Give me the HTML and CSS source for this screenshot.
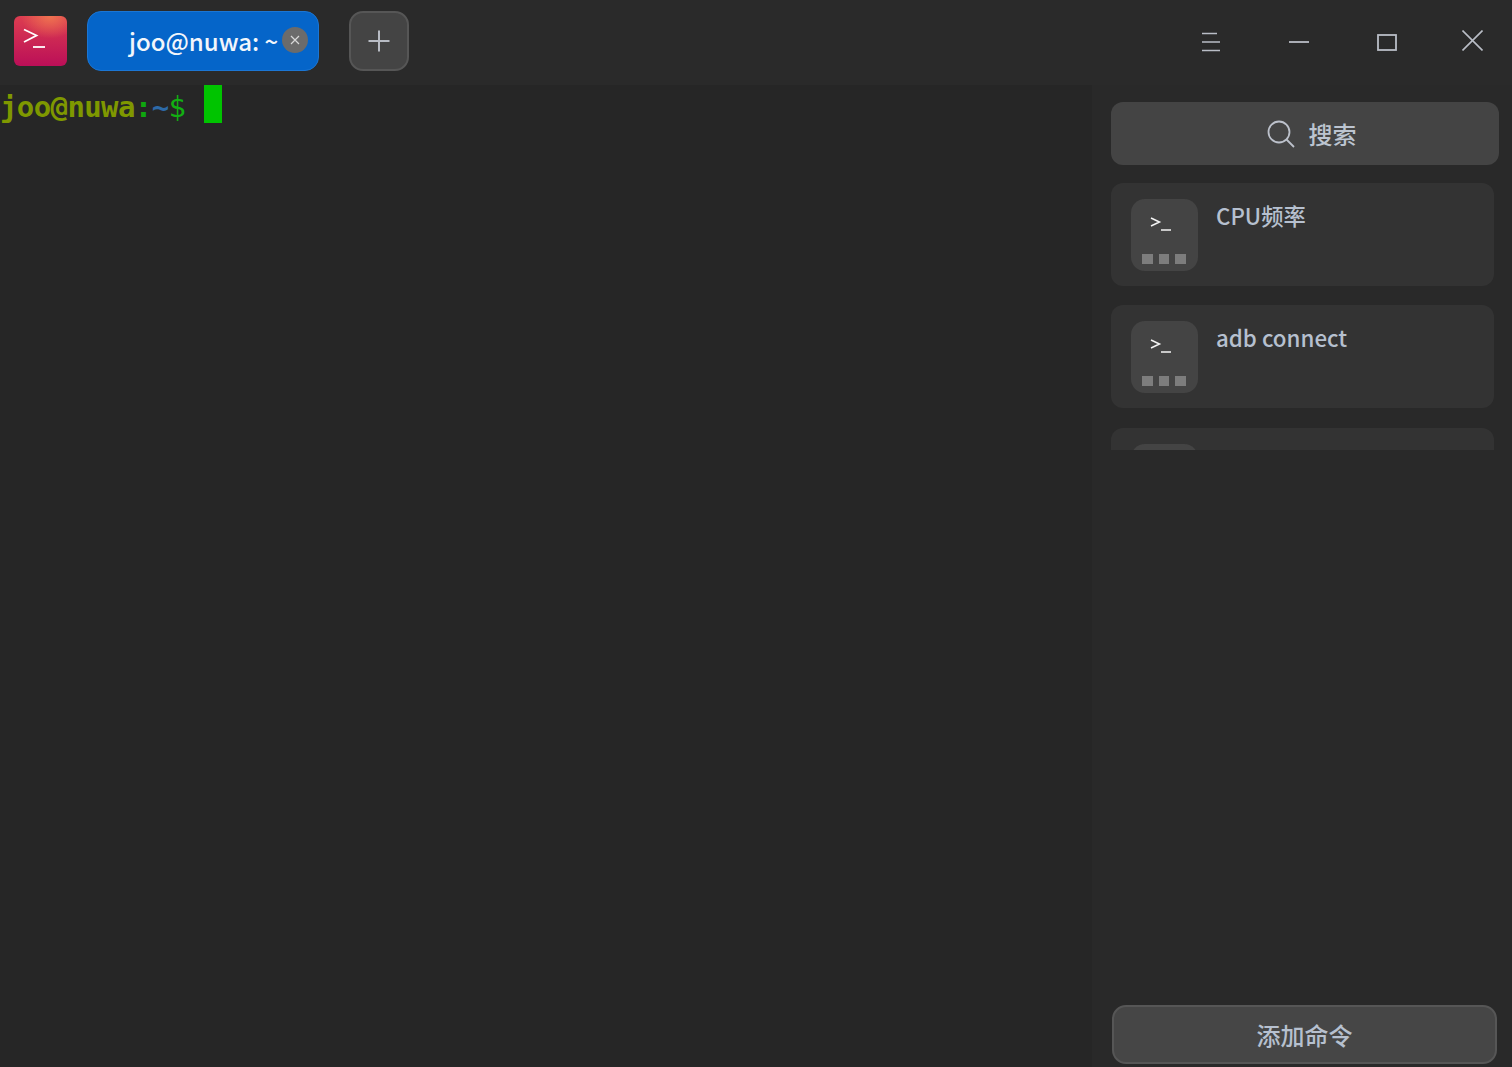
FILE: index.html
```html
<!DOCTYPE html>
<html lang="zh">
<head>
<meta charset="utf-8">
<title>joo@nuwa: ~</title>
<link rel="stylesheet" href="styles.css">
</head>
<body>
<header class="titlebar">
  <div class="logo">
    <svg width="53" height="50" viewBox="0 0 53 50" fill="none" stroke="#fff"><path d="M10 13.500 L22.500 19.500 L10 26" stroke-width="1.800"/><path d="M19 31 H31" stroke-width="1.800"/></svg>
  </div>
  <div class="tab">
    <span class="tab-title">joo@nuwa: ~</span>
    <span class="tab-close">
      <svg width="10" height="10" viewBox="0 0 10 10" stroke="#d8d8d8" stroke-width="1.200"><path d="M1 1 L9 9 M9 1 L1 9"/></svg>
    </span>
  </div>
  <button class="new-tab" aria-label="new tab">
    <svg width="22" height="22" viewBox="0 0 22 22" stroke="#b8bcc4" stroke-width="2"><path d="M11 0.500 V21.500 M0.500 11 H21.500"/></svg>
  </button>
  <div class="win-controls">
    <svg class="win-menu" width="18" height="20" viewBox="0 0 18 20" stroke="#b9bdc6" stroke-width="1.700"><path d="M0 1.500 H15 M0 10 H18 M0 18.500 H18"/></svg>
    <svg class="win-min" width="20" height="4" viewBox="0 0 20 4" stroke="#b9bdc6" stroke-width="1.800"><path d="M0 2 H20"/></svg>
    <svg class="win-max" width="20" height="17" viewBox="0 0 20 17" fill="none" stroke="#b9bdc6" stroke-width="1.800"><rect x="1" y="1" width="18" height="15"/></svg>
    <svg class="win-close" width="21" height="21" viewBox="0 0 21 21" stroke="#b9bdc6" stroke-width="1.600"><path d="M0.500 0.500 L20.500 20.500 M20.500 0.500 L0.500 20.500"/></svg>
  </div>
</header>
<main class="content">
  <section class="terminal">
    <div class="prompt"><span class="user">joo@nuwa</span><span class="colon">:</span><span class="tilde">~</span><span class="dollar">$</span><span class="cursor"></span></div>
  </section>
  <aside class="sidebar">
    <button class="search"><svg width="28" height="28" viewBox="0 0 28 28" fill="none" stroke="#bcc1cb" stroke-width="1.800"><circle cx="12" cy="12" r="10.500"/><path d="M19.500 19.500 L27 27"/></svg><span>搜索</span></button>
    <div class="list">
      <article class="card"><div class="cmd-icon"><svg class="cmd-glyph" width="24" height="18" viewBox="0 0 24 18" fill="none" stroke="#f4f4f4" stroke-width="1.500"><path d="M1 1 L9.500 5 L1 9"/><path d="M11 13 H21"/></svg><span class="dots"><i></i><i></i><i></i></span></div><div class="card-title">CPU频率</div></article>
      <article class="card"><div class="cmd-icon"><svg class="cmd-glyph" width="24" height="18" viewBox="0 0 24 18" fill="none" stroke="#f4f4f4" stroke-width="1.500"><path d="M1 1 L9.500 5 L1 9"/><path d="M11 13 H21"/></svg><span class="dots"><i></i><i></i><i></i></span></div><div class="card-title">adb connect</div></article>
      <article class="card third"><div class="cmd-icon"></div></article>
    </div>
    <button class="add">添加命令</button>
  </aside>
</main>
</body>
</html>
```
FILE: styles.css
```css
* { box-sizing: border-box; }
html, body { margin: 0; height: 100%; overflow: hidden; }
body {
  width: 1512px; height: 1067px;
  background: #262626;
  font-family: "Noto Sans CJK SC", "Noto Sans", sans-serif;
  display: flex; flex-direction: column;
}
button { font-family: inherit; padding: 0; cursor: pointer; }

.titlebar {
  height: 85px; flex: none;
  background: #2a2a2a;
  display: flex; align-items: flex-start;
  padding: 11px 0 0 14px;
}
.logo {
  width: 53px; height: 50px; margin-top: 5px;
  border-radius: 6px;
  background: radial-gradient(ellipse 55% 45% at 68% 0%, #ef7350 0%, rgba(239,115,80,0) 100%), linear-gradient(#dc3d50, #bb0f58);
}
.logo svg { display: block; }
.tab {
  width: 232px; height: 60px; margin-left: 20px;
  background: #0565c9;
  border: 1px solid #1b76d4;
  border-radius: 14px;
  display: flex; align-items: center;
  padding-left: 41px;
  position: relative;
}
.tab-title { color: #f2f6fb; font-size: 24px; line-height: 1; white-space: nowrap; font-weight: 500; }
.tab-close {
  position: absolute; left: 194px; top: 15px;
  width: 26px; height: 26px; border-radius: 50%;
  background: #6b6b6b;
  display: flex; align-items: center; justify-content: center;
}
.new-tab {
  width: 60px; height: 60px; margin-left: 30px;
  background: #444;
  border: 2px solid #565656;
  border-radius: 14px;
  display: flex; align-items: center; justify-content: center;
}
.win-controls { position: relative; flex: 1; height: 60px; }
.win-controls svg { position: absolute; }
.win-menu { left: 793px; top: 21px; }
.win-min { left: 880px; top: 29px; }
.win-max { left: 968px; top: 23px; }
.win-close { left: 1053px; top: 19px; }

.content { flex: 1; display: flex; min-height: 0; }
.terminal { flex: 1; min-width: 0; background: #262626; }
.prompt {
  display: flex; align-items: flex-start;
  font-family: "DejaVu Sans Mono", monospace;
  font-size: 29px; letter-spacing: -0.610px; line-height: 44px; height: 38px;
  white-space: pre;
}
.user { color: #7f9800; font-weight: bold; }
.colon { color: #0fa80f; font-weight: bold; }
.tilde { color: #2d6aa8; font-weight: bold; }
.dollar { color: #12b012; }
.cursor { width: 18px; height: 38px; background: #00c400; margin-left: 18.600px; }

.sidebar {
  width: 420px; flex: none;
  background: #292929;
  display: flex; flex-direction: column;
  padding: 17px 13px 3px 19px;
}
.search {
  width: 388px; height: 63px; flex: none;
  background: #444;
  border: 0; border-radius: 12px;
  display: flex; align-items: center; justify-content: center; gap: 14px;
  color: #bcc4d0; font-size: 24px; font-weight: 500;
  padding-left: 13px;
}
.list {
  height: 267px; margin-top: 18px; flex: none;
  width: 383px;
  overflow: hidden;
  display: flex; flex-direction: column; gap: 19px;
}
.card {
  height: 103px; flex: none;
  background: #333;
  border-radius: 12px;
  padding: 16px 20px;
  display: flex; gap: 18px;
}
.third { margin-top: 1px; }
.cmd-icon {
  width: 67px; height: 72px; flex: none;
  background: #444; border-radius: 14px;
  position: relative;
}
.cmd-glyph { position: absolute; left: 19px; top: 18px; }
.dots { position: absolute; left: 11px; top: 55px; display: flex; gap: 6px; }
.dots i { display: block; width: 10.500px; height: 10px; background: #7d7d7d; }
.card-title { color: #b6c0cf; font-size: 22.300px; line-height: 34px; font-weight: 500; margin-top: -1px; }
.add {
  width: 385px; height: 59px; flex: none;
  margin-top: auto; margin-left: 1px;
  background: #464646;
  border: 2px solid #565656; border-radius: 14px;
  color: #b6c0cf; font-size: 24px; font-weight: 500;
}
```
